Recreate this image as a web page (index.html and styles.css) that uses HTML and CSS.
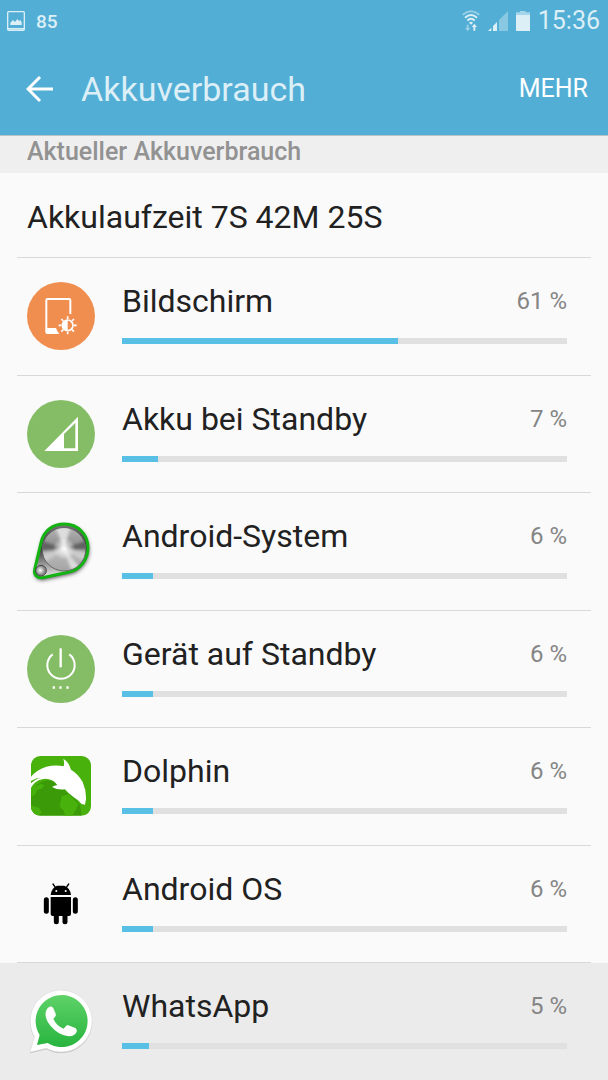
FILE: index.html
```html
<!DOCTYPE html>
<html lang="de">

<head>
  <meta charset="UTF-8">
  <meta name="viewport" content="width=device-width, initial-scale=1.0">
  <title>Akkuverbrauch</title>
  <link rel="stylesheet" href="styles.css">
</head>

<body>
  <header class="top">
    <div class="statusbar">
      <svg class="picture" width="18" height="20" viewBox="0 0 54 60">
        <rect x="2" y="2" width="50" height="56" rx="3" fill="none" stroke="currentColor" stroke-width="4" />
        <path d="M10 42V35l8-8 6 6 7-9 5 6 4-3 4 7v8z" fill="currentColor" />
        <path d="M2 51h50v5H2z" fill="currentColor" />
      </svg>
      <span class="level">85</span>
      <div class="indicators">
        <svg width="18" height="22" viewBox="0 0 54 66">
          <g fill="none" stroke="currentColor" stroke-width="6">
            <path d="M2 14Q27-6 52 14" opacity=".5" />
            <path d="M9 23Q27 7 45 23" />
            <path d="M16 32Q27 21 38 32" />
          </g>
          <path d="M21 38Q27 33 33 38L27 44z" fill="currentColor" />
          <path d="M14 44h6v10h5l-8 10-8-10h5z" fill="currentColor" opacity=".5" />
          <path d="M34 62h6V51h5l-8-10-8 10h5z" fill="currentColor" />
        </svg>
        <svg width="20" height="20" viewBox="0 0 60 60">
          <path d="M0 60L10 50V60zM15 45L27 33V60H15z" fill="currentColor" />
          <path d="M33 27L60 0V60H33z" fill="currentColor" opacity=".4" />
        </svg>
        <svg width="14" height="20" viewBox="0 0 42 60">
          <path d="M0 12V4h12V0h17v4h13v8z" fill="currentColor" opacity=".6" />
          <path d="M0 12h42v48H0z" fill="currentColor" />
        </svg>
        <time class="clock">15:36</time>
      </div>
    </div>
    <div class="appbar">
      <button class="back" aria-label="Zurück">
        <svg width="28" height="28" viewBox="0 0 28 28" fill="none" stroke="currentColor" stroke-width="3">
          <path d="M27 14H2M14 2L2 14l12 12" />
        </svg>
      </button>
      <h1>Akkuverbrauch</h1>
      <button class="more">MEHR</button>
    </div>
  </header>

  <main>
    <h2>Aktueller Akkuverbrauch</h2>
    <p class="runtime">Akkulaufzeit 7S 42M 25S</p>

    <ul class="usage">
      <li>
        <div class="row">
          <svg class="icon" viewBox="81 276 204 204">
            <circle cx="183" cy="378" r="102" fill="#f08e50" />
            <path d="M211 372V331q0-4-4-4H143q-4 0-4 4v94q0 4 4 4h30" fill="none" stroke="#fff" stroke-width="6" />
            <path d="M138 414h30q3 10 10 18H143q-6 0-6-6z" fill="#fff" />
            <g stroke="#fff" stroke-width="5">
              <path d="M203 379v8M203 425v8M176 406h8M222 406h8M184 387l6 6M216 419l6 6M184 425l6-6M216 393l6-6" />
              <circle cx="203" cy="406" r="16" fill="none" />
            </g>
            <path d="M203 390a16 16 0 0 0 0 32z" fill="#fff" />
          </svg>
          <div class="info">
            <label class="name" for="bildschirm">Bildschirm</label>
            <span class="percent">61 %</span>
            <progress id="bildschirm" value="62" max="100"></progress>
          </div>
        </div>
      </li>
      <li>
        <div class="row">
          <svg class="icon" viewBox="36 30 204 204">
            <circle cx="138" cy="132" r="102" fill="#85bd67" />
            <path d="M88 183L189 80V183zM147 132V175H181V99z" fill="#fff" fill-rule="evenodd" />
          </svg>
          <div class="info">
            <label class="name" for="akku-standby">Akku bei Standby</label>
            <span class="percent">7 %</span>
            <progress id="akku-standby" value="8" max="100"></progress>
          </div>
        </div>
      </li>
      <li>
        <div class="row">
          <svg class="icon" viewBox="36 22 204 204">
            <defs>
              <linearGradient id="metal" x1="0" y1="0" x2="0" y2="1">
                <stop offset="0" stop-color="#b4b4b4" />
                <stop offset=".45" stop-color="#8c8c8c" />
                <stop offset=".6" stop-color="#b8b8b8" />
                <stop offset="1" stop-color="#a4a4a4" />
              </linearGradient>
              <radialGradient id="shine">
                <stop offset="0" stop-color="#fff" />
                <stop offset="1" stop-color="#fff" stop-opacity="0" />
              </radialGradient>
              <linearGradient id="plate" x1="0" y1="0" x2="0" y2="1">
                <stop offset="0" stop-color="#777" />
                <stop offset=".45" stop-color="#333" />
                <stop offset="1" stop-color="#eee" />
              </linearGradient>
              <filter id="soft" x="-20%" y="-20%" width="140%" height="140%">
                <feGaussianBlur stdDeviation="6" />
              </filter>
              <filter id="brush">
                <feGaussianBlur stdDeviation="5" />
              </filter>
              <clipPath id="disc">
                <circle cx="147" cy="119" r="64" />
              </clipPath>
            </defs>
            <path d="M78 99C86 62 114 43 148 43C190 43 219 75 219 114C219 149 196 178 166 186L82 204C66 206 55 194 59 179z" transform="translate(2 6)" fill="#333" filter="url(#soft)" />
            <path d="M78 99C86 62 114 43 148 43C190 43 219 75 219 114C219 149 196 178 166 186L82 204C66 206 55 194 59 179z" fill="url(#plate)" stroke="#12b412" stroke-width="9" />
            <circle cx="147" cy="119" r="65" fill="url(#metal)" stroke="#666" stroke-width="3" />
            <g clip-path="url(#disc)">
              <g filter="url(#brush)">
                <path d="M147 117L120 50H168zM147 117L200 180H168z" fill="#ddd" />
                <path d="M147 117L75 92V122zM147 117L222 90V118z" fill="#606060" />
                <path d="M147 117L215 130V160zM147 117L80 135V165z" fill="#ccc" />
              </g>
              <circle cx="147" cy="117" r="34" fill="url(#shine)" />
            </g>
            <circle cx="78" cy="183" r="16" fill="#888" stroke="#444" stroke-width="3" />
            <circle cx="76" cy="182" r="13" fill="url(#shine)" />
          </svg>
          <div class="info">
            <label class="name" for="android-system">Android-System</label>
            <span class="percent">6 %</span>
            <progress id="android-system" value="7" max="100"></progress>
          </div>
        </div>
      </li>
      <li>
        <div class="row">
          <svg class="icon" viewBox="36 30 204 204">
            <circle cx="138" cy="132" r="102" fill="#85bd67" />
            <path d="M113 88A41 41 0 1 0 163 88" fill="none" stroke="#fff" stroke-width="6" />
            <path d="M137 70V127" stroke="#fff" stroke-width="7" />
            <path d="M113 184h7v7h-7zM133 184h7v7h-7zM154 184h7v7h-7z" fill="#fff" />
          </svg>
          <div class="info">
            <label class="name" for="geraet-standby">Gerät auf Standby</label>
            <span class="percent">6 %</span>
            <progress id="geraet-standby" value="7" max="100"></progress>
          </div>
        </div>
      </li>
      <li>
        <div class="row">
          <svg class="icon" viewBox="36 22 204 204">
            <defs>
              <clipPath id="tile">
                <rect x="48" y="34" width="180" height="179" rx="28" />
              </clipPath>
            </defs>
            <g clip-path="url(#tile)">
              <path d="M48 34h180v179H48z" fill="#48b10b" />
              <path d="M48 150Q56 122 84 110Q105 104 122 114L150 138Q190 165 196 185L200 213H48z" fill="#3a9a08" />
              <path d="M56 128L78 118L88 122L80 132L66 136L60 150L48 156zM140 155L160 148L190 178L186 190L172 213H150L146 197L134 186zM48 182L72 190L80 203L70 213H48z" fill="#48b10b" />
              <path d="M48 96Q66 75 94 66Q122 59 146 65Q149 54 145 42Q162 52 168 75Q190 88 203 112Q214 137 213 163L210 180L200 178Q191 165 178 159Q160 147 150 134Q128 137 111 127Q118 122 127 121Q121 112 111 107Q92 98 71 107Q58 113 48 129V116Q61 103 79 99Q63 99 48 109z" fill="#fff" />
            </g>
          </svg>
          <div class="info">
            <label class="name" for="dolphin">Dolphin</label>
            <span class="percent">6 %</span>
            <progress id="dolphin" value="7" max="100"></progress>
          </div>
        </div>
      </li>
      <li>
        <div class="row">
          <svg class="icon" viewBox="36 15 204 204">
            <path d="M107 90Q109 69 126 62L148 62Q166 69 168 90z" />
            <path d="M114 57L121 67M161 57L154 67" stroke="#000" stroke-width="4" stroke-linecap="round" />
            <path d="M107 96H168V147Q168 153 162 153H113Q107 153 107 147z" />
            <g stroke="#000" stroke-width="15" stroke-linecap="round">
              <path d="M94 104V139M181 104V139M124 150V170M150 150V170" />
            </g>
            <circle cx="124" cy="78" r="3" fill="#fff" />
            <circle cx="152" cy="78" r="3" fill="#fff" />
          </svg>
          <div class="info">
            <label class="name" for="android-os">Android OS</label>
            <span class="percent">6 %</span>
            <progress id="android-os" value="7" max="100"></progress>
          </div>
        </div>
      </li>
      <li class="pressed">
        <div class="row">
          <svg class="icon" viewBox="81 96 204 204">
            <defs>
              <linearGradient id="bubble" x1="0" y1="0" x2="0" y2="1">
                <stop offset="0" stop-color="#5fd268" />
                <stop offset="1" stop-color="#27b43e" />
              </linearGradient>
            </defs>
            <path d="M90 292L103 245A93 93 0 1 1 139 280z" fill="#999" opacity=".6" transform="translate(0 3)" />
            <path d="M90 292L103 245A93 93 0 1 1 139 280z" fill="#fff" stroke="#ddd" stroke-width="2" />
            <path d="M111 270L119 240A78 78 0 1 1 143 264z" fill="url(#bubble)" />
            <path d="M148 155Q157 152 160 160L167 176Q170 182 160 191Q169 212 191 221Q199 211 203 210L226 219Q232 223 230 230Q223 246 202 243Q174 239 152 213Q134 192 137 172Q139 160 148 155z" fill="#fff" />
          </svg>
          <div class="info">
            <label class="name" for="whatsapp">WhatsApp</label>
            <span class="percent">5 %</span>
            <progress id="whatsapp" value="6" max="100"></progress>
          </div>
        </div>
      </li>
    </ul>
  </main>
</body>

</html>
```
FILE: styles.css
```css
* {
  box-sizing: border-box;
}

body {
  margin: 0;
  min-height: 100vh;
  display: flex;
  flex-direction: column;
  font-family: Roboto, "Liberation Sans", sans-serif;
  background-color: #fafafa;
  color: #212121;
}

h1,
h2,
p,
ul {
  margin: 0;
  padding: 0;
}

button {
  padding: 0;
  border: 0;
  background: none;
  color: #ffffff;
  font-family: inherit;
  cursor: pointer;
}

svg {
  display: block;
  flex-shrink: 0;
}

.top {
  background-color: #52aed5;
  border-bottom: 1px solid #b9c3c7;
  color: #dceff7;
}

.statusbar {
  height: 42px;
  padding: 0 8px 0 7px;
  display: flex;
  align-items: center;
}

.level {
  margin-left: 11px;
  font-size: 19px;
  font-weight: 500;
}

.indicators {
  margin-left: auto;
  display: flex;
  align-items: center;
  gap: 8px;
}

.clock {
  font-size: 25px;
  line-height: 42px;
}

.appbar {
  height: 93px;
  padding: 0 20px 0 26px;
  display: flex;
  align-items: center;
}

.back {
  margin-right: 27px;
}

h1 {
  font-size: 34px;
  font-weight: 400;
}

.more {
  margin-left: auto;
  font-size: 25px;
}

main {
  flex: 1;
  display: flex;
  flex-direction: column;
}

h2 {
  height: 37px;
  padding: 0 27px;
  background-color: #efefef;
  color: #929292;
  font-size: 25px;
  font-weight: 500;
  line-height: 32px;
}

.runtime {
  height: 85px;
  margin: 0 17px;
  padding: 2px 10px 0;
  border-bottom: 1px solid #d9d9d9;
  font-size: 32px;
  line-height: 84px;
}

.usage {
  flex: 1;
  display: flex;
  flex-direction: column;
  list-style: none;
}

.usage li {
  flex: 1;
  display: flex;
}

.row {
  flex: 1;
  margin: 0 17px;
  padding: 24px 24px 0 10px;
  border-bottom: 1px solid #d9d9d9;
  display: flex;
  align-items: flex-start;
  gap: 27px;
}

.pressed {
  background-color: #ebebeb;
}

.pressed .row {
  border-bottom: 0;
}

.icon {
  width: 68px;
  height: 68px;
}

.info {
  flex: 1;
  display: grid;
  grid-template-columns: 1fr auto;
  align-items: center;
  row-gap: 18px;
}

.name {
  font-size: 32px;
  line-height: 38px;
}

.percent {
  color: #858585;
  font-size: 24px;
}

progress {
  grid-column: 1 / 3;
  width: 100%;
  height: 6px;
  border: 0;
  background-color: #e0e0e0;
  appearance: none;
}

progress::-webkit-progress-bar {
  background-color: #e0e0e0;
}

progress::-webkit-progress-value {
  background-color: #58bfe5;
}
```
